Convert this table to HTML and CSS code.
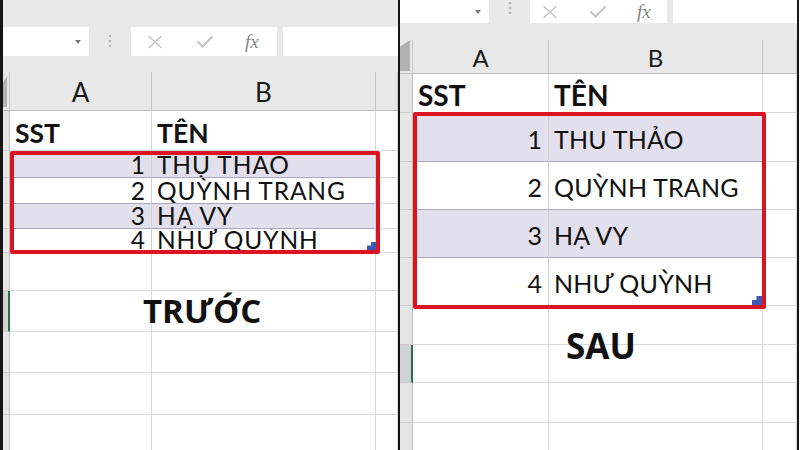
FILE: index.html
```html
<!DOCTYPE html>
<html lang="vi">
<head>
<meta charset="utf-8">
<title>Trước / Sau</title>
<link rel="stylesheet" href="styles.css">
</head>
<body>
<main class="frame">
  <section class="pane pane--before">
    <div class="fbar">
      <div class="namebox"><span class="caret"></span></div>
      <div class="grip"><svg width="4" height="14" viewBox="0 0 4 14"><circle cx="2" cy="2" r="1.3"/><circle cx="2" cy="7" r="1.3"/><circle cx="2" cy="12" r="1.3"/></svg></div>
      <div class="fxbox">
        <svg class="ic-x" width="16" height="14" viewBox="0 0 16 14"><path d="M1.5 1 L14.5 13 M14.5 1 L1.5 13"/></svg>
        <svg class="ic-ok" width="18" height="13" viewBox="0 0 18 13"><path d="M1.5 6.5 L6.5 11.5 L16.5 1.5"/></svg>
        <span class="fx">fx</span>
      </div>
      <div class="finput"></div>
    </div>
    <div class="sheet">
      <div class="row colhdr"><div class="rh corner"><span class="tri"></span></div><div class="cell">A</div><div class="cell">B</div><div class="cell"></div></div>
      <div class="row head r-head"><div class="rh"></div><div class="cell">SST</div><div class="cell">TÊN</div><div class="cell"></div></div>
      <div class="tbl">
        <div class="row trow alt r-t1"><div class="rh"></div><div class="cell d num">1</div><div class="cell d">THỤ THẢO</div><div class="cell"></div></div>
        <div class="row trow r-t2"><div class="rh"></div><div class="cell d num">2</div><div class="cell d">QUỲNH TRANG</div><div class="cell"></div></div>
        <div class="row trow alt r-t3"><div class="rh"></div><div class="cell d num">3</div><div class="cell d">HẠ VY</div><div class="cell"></div></div>
        <div class="row trow r-t4"><div class="rh"></div><div class="cell d num">4</div><div class="cell d">NHƯ QUỲNH</div><div class="cell"></div></div>
        <div class="sel"><span class="handle"></span></div>
      </div>
      <div class="row r-e1"><div class="rh"></div><div class="cell"></div><div class="cell"></div><div class="cell"></div></div>
      <div class="row r-e2"><div class="rh active"></div><div class="cell"></div><div class="cell"></div><div class="cell"></div></div>
      <div class="row r-e3"><div class="rh"></div><div class="cell"></div><div class="cell"></div><div class="cell"></div></div>
      <div class="row r-e4"><div class="rh"></div><div class="cell"></div><div class="cell"></div><div class="cell"></div></div>
      <div class="row r-e5"><div class="rh"></div><div class="cell"></div><div class="cell"></div><div class="cell"></div></div>
    </div>
    <p class="label">TRƯỚC</p>
  </section>

  <section class="pane pane--after">
    <div class="fbar">
      <div class="namebox"><span class="caret"></span></div>
      <div class="grip"><svg width="4" height="14" viewBox="0 0 4 14"><circle cx="2" cy="2" r="1.3"/><circle cx="2" cy="7" r="1.3"/><circle cx="2" cy="12" r="1.3"/></svg></div>
      <div class="fxbox">
        <svg class="ic-x" width="16" height="14" viewBox="0 0 16 14"><path d="M1.5 1 L14.5 13 M14.5 1 L1.5 13"/></svg>
        <svg class="ic-ok" width="18" height="13" viewBox="0 0 18 13"><path d="M1.5 6.5 L6.5 11.5 L16.5 1.5"/></svg>
        <span class="fx">fx</span>
      </div>
      <div class="finput"></div>
    </div>
    <div class="sheet">
      <div class="row colhdr"><div class="rh corner"><span class="tri"></span></div><div class="cell">A</div><div class="cell">B</div><div class="cell"></div></div>
      <div class="row head r-head"><div class="rh"></div><div class="cell">SST</div><div class="cell">TÊN</div><div class="cell"></div></div>
      <div class="tbl">
        <div class="row trow alt r-t1"><div class="rh"></div><div class="cell d num">1</div><div class="cell d">THU THẢO</div><div class="cell"></div></div>
        <div class="row trow r-t2"><div class="rh"></div><div class="cell d num">2</div><div class="cell d">QUỲNH TRANG</div><div class="cell"></div></div>
        <div class="row trow alt r-t3"><div class="rh"></div><div class="cell d num">3</div><div class="cell d">HẠ VY</div><div class="cell"></div></div>
        <div class="row trow r-t4"><div class="rh"></div><div class="cell d num">4</div><div class="cell d">NHƯ QUỲNH</div><div class="cell"></div></div>
        <div class="sel"><span class="handle"></span></div>
      </div>
      <div class="row r-e1"><div class="rh"></div><div class="cell"></div><div class="cell"></div><div class="cell"></div></div>
      <div class="row r-e2"><div class="rh active"></div><div class="cell"></div><div class="cell"></div><div class="cell"></div></div>
      <div class="row r-e3"><div class="rh"></div><div class="cell"></div><div class="cell"></div><div class="cell"></div></div>
      <div class="row r-e4"><div class="rh"></div><div class="cell"></div><div class="cell"></div><div class="cell"></div></div>
    </div>
    <p class="label">SAU</p>
  </section>
</main>
</body>
</html>
```
FILE: styles.css
```css
* { box-sizing: border-box; margin: 0; padding: 0; }
html, body { width: 800px; height: 450px; overflow: hidden; background: #fff; }
body { font-family: Lato, "Noto Sans", sans-serif; color: #111; }

.frame { display: flex; height: 450px; border-left: 3px solid #161616; }

.pane {
  position: relative;
  overflow: hidden;
  height: 450px;
  display: flex;
  flex-direction: column;
  border-right: 2px solid #161616;
  background: #fff;
}

.pane--before {
  width: 397px;
  --c0: 7px; --c1: 142px; --c2: 224px;
  --fb-top: 27px; --fb-h: 29px; --fb-gap: 16px;
  --name-w: 86px; --grip-w: 42px; --fx-w: 146px;
  --fx-pad: 16px; --gap1: 33px; --gap2: 31px; --grip-pt: 7px;
  --hdr-h: 39px; --hdr-fs: 26px;
  --head-fs: 26.5px; --head-pb: 4px;
  --cell-fs: 24.5px; --cell-ls: 0.9px; --cell-pb: 0px;
  --tri-w: 5px; --tri-h: 31px; --tri-r: 2px; --tri-b: 3px;
}
.pane--after {
  width: 399px;
  --c0: 13px; --c1: 136px; --c2: 214px;
  --fb-top: 0px; --fb-h: 23px; --fb-gap: 17px;
  --name-w: 89px; --grip-w: 41px; --fx-w: 137px;
  --fx-pad: 12px; --gap1: 31px; --gap2: 30px; --grip-pt: 1px;
  --hdr-h: 34px; --hdr-fs: 24px;
  --head-fs: 28px; --head-pb: 3px;
  --cell-fs: 25px; --cell-ls: 0.2px; --cell-pb: 9px;
  --tri-w: 10px; --tri-h: 31px; --tri-r: 2px; --tri-b: 2px;
}

/* formula bar */
.fbar {
  display: flex;
  background: #e9e9e9;
  padding: var(--fb-top) 0 var(--fb-gap);
  flex: none;
}
.fbar > * { height: var(--fb-h); flex: none; }
.namebox {
  width: var(--name-w);
  background: #fff;
  display: flex;
  align-items: center;
  justify-content: flex-end;
  padding-right: 8px;
}
.caret {
  width: 0; height: 0;
  border-left: 3px solid transparent;
  border-right: 3px solid transparent;
  border-top: 4px solid #7a7a7a;
}
.grip { width: var(--grip-w); display: flex; align-items: flex-start; justify-content: center; padding-top: var(--grip-pt); }
.grip svg { fill: #b5b5b5; }
.fxbox {
  width: var(--fx-w);
  background: #fff;
  display: flex;
  align-items: center;
  padding-left: var(--fx-pad);
}
.ic-x path { stroke: #c3c3c3; stroke-width: 1.4; fill: none; }
.ic-ok { margin-left: var(--gap1); }
.ic-ok path { stroke: #c6c6c6; stroke-width: 2.2; fill: none; }
.fx {
  margin-left: var(--gap2);
  font-family: "Liberation Serif", serif;
  font-style: italic;
  font-size: 19px;
  color: #858585;
  line-height: 1;
}
.finput { flex: 1 1 auto !important; margin-left: 6px; background: #fff; }

/* sheet grid */
.sheet { display: flex; flex-direction: column; flex: none; }
.row {
  display: grid;
  grid-template-columns: var(--c0) var(--c1) var(--c2) 1fr;
  flex: none;
}
.cell {
  border-right: 1px solid #dadada;
  border-bottom: 1px solid #dadada;
  display: flex;
  align-items: flex-end;
  overflow: hidden;
  white-space: nowrap;
  line-height: 1;
  padding: 0 5px;
}
.rh {
  background: #e6e6e6;
  border-right: 1px solid #bdbdbd;
  border-bottom: 1px solid #cdcdcd;
}
.rh.active { background: #d2d2d2; border-right: 2px solid #217346; }

.colhdr { height: var(--hdr-h); background: #e8e8e8; }
.colhdr .cell {
  border-right-color: #c6c6c6;
  border-bottom-color: #bcbcbc;
  align-items: center;
  justify-content: center;
  font-size: var(--hdr-fs);
  color: #1a1a1a;
  padding-top: 2px;
}
.colhdr .rh { border-bottom-color: #bcbcbc; background: #e8e8e8; border-right-color: #c6c6c6; }
.corner { display: flex; justify-content: flex-end; align-items: flex-end; padding: 0 var(--tri-r) var(--tri-b) 0; }
.tri {
  display: block;
  width: var(--tri-w);
  height: var(--tri-h);
  background: #b2b2b2;
  clip-path: polygon(0 22%, 100% 0, 100% 100%, 0 100%);
}

.head .cell { font-weight: 700; font-size: var(--head-fs); padding-bottom: var(--head-pb); }

.tbl { position: relative; flex: none; }
.trow .cell { font-size: var(--cell-fs); letter-spacing: var(--cell-ls); padding-bottom: var(--cell-pb); }
.trow .cell.d { border-bottom-color: #a9a6c0; border-right-color: #cfcfcf; }
.trow.alt .cell.d { background: #e3e0ee; }
.cell.num { justify-content: flex-end; padding-right: 6px; letter-spacing: 0; }

.sel {
  position: absolute;
  border: 4px solid #dc1421;
  border-radius: 2px;
}
.handle {
  position: absolute;
  right: 0; bottom: 0;
  width: 9px; height: 8px;
  background: #3d58b6;
  clip-path: polygon(45% 0, 100% 0, 100% 100%, 0 100%, 0 45%, 45% 45%);
}

.label {
  position: absolute;
  font-family: "Open Sans", sans-serif;
  font-weight: 700;
  line-height: 1;
  color: #111;
  white-space: nowrap;
}

/* row heights – before */
.pane--before .r-head { height: 40px; }
.pane--before .r-t1 { height: 27px; }
.pane--before .r-t2 { height: 26px; }
.pane--before .r-t3 { height: 25px; }
.pane--before .r-t4 { height: 24px; }
.pane--before .r-e1 { height: 38px; }
.pane--before .r-e2 { height: 41px; }
.pane--before .r-e3 { height: 41px; }
.pane--before .r-e4 { height: 42px; }
.pane--before .r-e5 { height: 41px; }
.pane--before .sel { top: 0; left: 7px; width: 370px; height: 103px; }
.pane--before .label { left: 140px; top: 294px; font-size: 33px; }

/* row heights – after */
.pane--after .r-head { height: 39px; }
.pane--after .r-t1 { height: 49px; }
.pane--after .r-t2 { height: 48px; }
.pane--after .r-t3 { height: 48px; }
.pane--after .r-t4 { height: 48px; }
.pane--after .r-e1 { height: 39px; }
.pane--after .r-e2 { height: 38px; }
.pane--after .r-e3 { height: 40px; }
.pane--after .r-e4 { height: 39px; }
.pane--after .sel { top: -1px; left: 13px; width: 353px; height: 197px; }
.pane--after .handle { width: 10px; height: 9px; }
.pane--after .label { left: 166px; top: 328px; font-size: 35px; }
```
